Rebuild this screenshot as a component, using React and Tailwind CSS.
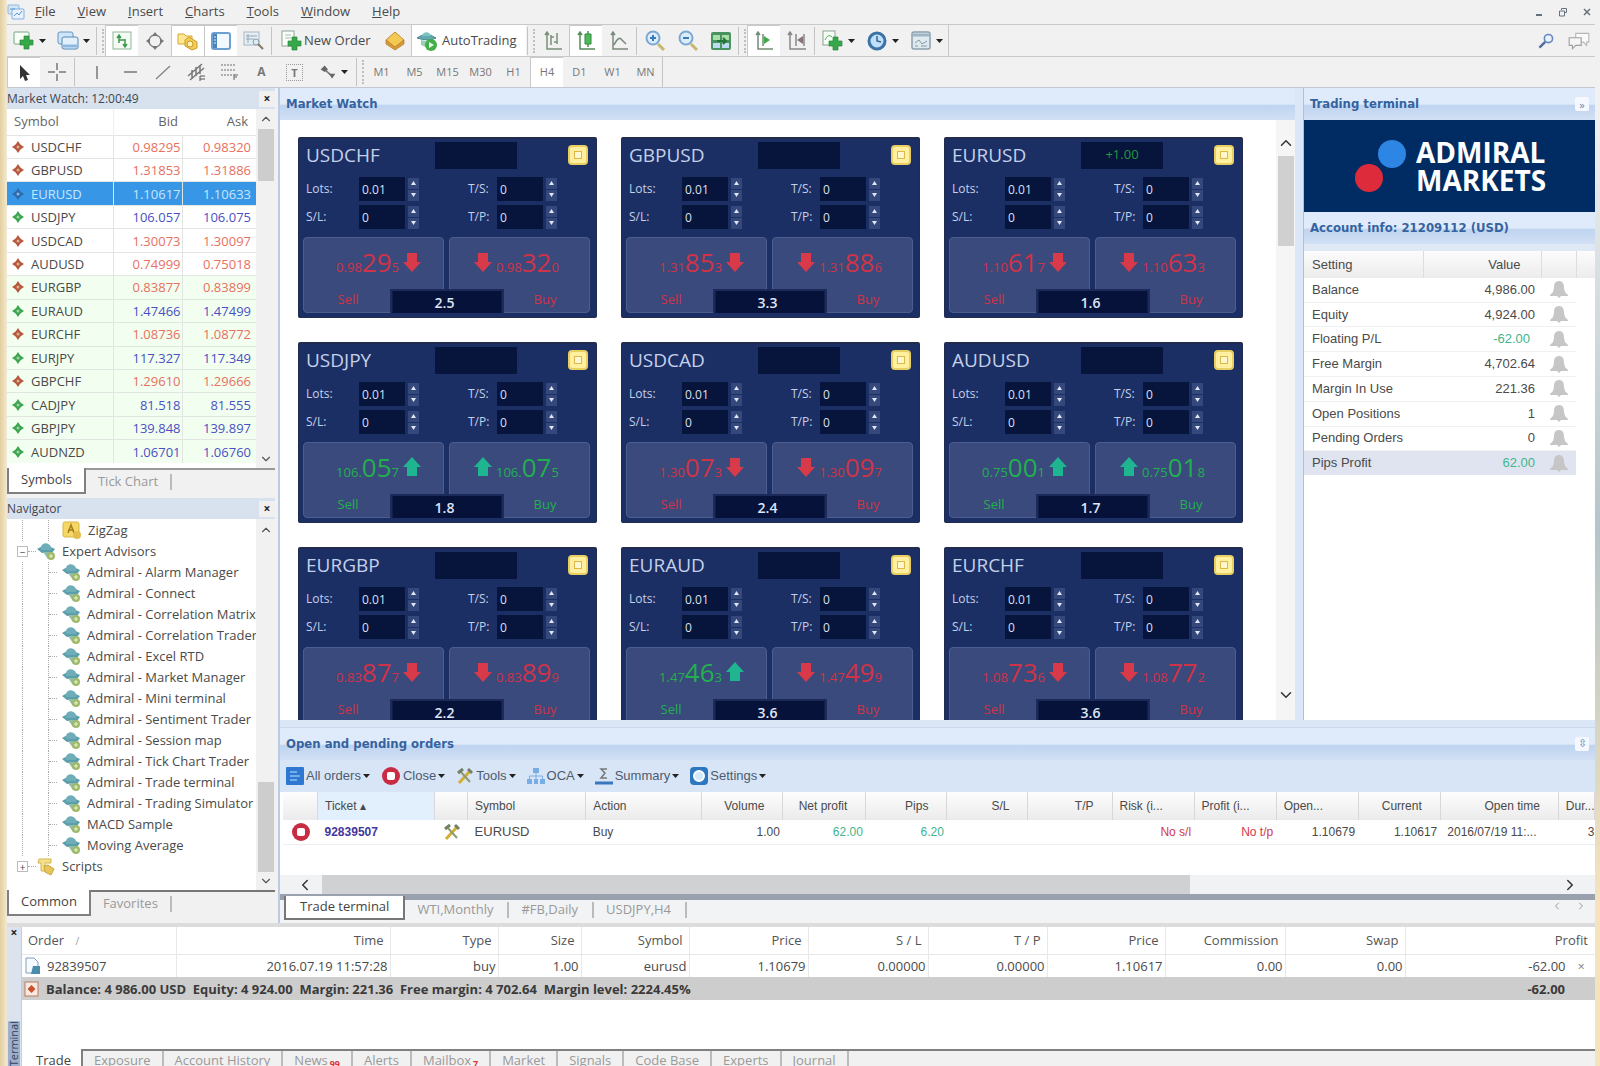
import React from "react";
import {
  ChevronDown,
  ChevronLeft,
  ChevronRight,
  ChevronUp,
} from "lucide-react";

const menus = ["File", "View", "Insert", "Charts", "Tools", "Window", "Help"];

const quotes = [
  ["USDCHF", "0.98295", "0.98320", "down"],
  ["GBPUSD", "1.31853", "1.31886", "down"],
  ["EURUSD", "1.10617", "1.10633", "selected"],
  ["USDJPY", "106.057", "106.075", "up"],
  ["USDCAD", "1.30073", "1.30097", "down"],
  ["AUDUSD", "0.74999", "0.75018", "down"],
  ["EURGBP", "0.83877", "0.83899", "down"],
  ["EURAUD", "1.47466", "1.47499", "up"],
  ["EURCHF", "1.08736", "1.08772", "down"],
  ["EURJPY", "117.327", "117.349", "up"],
  ["GBPCHF", "1.29610", "1.29666", "down"],
  ["CADJPY", "81.518", "81.555", "up"],
  ["GBPJPY", "139.848", "139.897", "up"],
  ["AUDNZD", "1.06701", "1.06760", "up"],
];

const advisors = [
  "Admiral - Alarm Manager",
  "Admiral - Connect",
  "Admiral - Correlation Matrix",
  "Admiral - Correlation Trader",
  "Admiral - Excel RTD",
  "Admiral - Market Manager",
  "Admiral - Mini terminal",
  "Admiral - Sentiment Trader",
  "Admiral - Session map",
  "Admiral - Tick Chart Trader",
  "Admiral - Trade terminal",
  "Admiral - Trading Simulator",
  "MACD Sample",
  "Moving Average",
];

const cards = [
  { symbol: "USDCHF", sell: ["0.98", "29", "5"], buy: ["0.98", "32", "0"], spread: "2.5" },
  { symbol: "GBPUSD", sell: ["1.31", "85", "3"], buy: ["1.31", "88", "6"], spread: "3.3" },
  { symbol: "EURUSD", sell: ["1.10", "61", "7"], buy: ["1.10", "63", "3"], spread: "1.6", position: "+1.00" },
  { symbol: "USDJPY", sell: ["106.", "05", "7"], buy: ["106.", "07", "5"], spread: "1.8", sellUp: true, buyUp: true },
  { symbol: "USDCAD", sell: ["1.30", "07", "3"], buy: ["1.30", "09", "7"], spread: "2.4" },
  { symbol: "AUDUSD", sell: ["0.75", "00", "1"], buy: ["0.75", "01", "8"], spread: "1.7", sellUp: true, buyUp: true },
  { symbol: "EURGBP", sell: ["0.83", "87", "7"], buy: ["0.83", "89", "9"], spread: "2.2" },
  { symbol: "EURAUD", sell: ["1.47", "46", "3"], buy: ["1.47", "49", "9"], spread: "3.6", sellUp: true },
  { symbol: "EURCHF", sell: ["1.08", "73", "6"], buy: ["1.08", "77", "2"], spread: "3.6" },
];

const account = [
  ["Balance", "4,986.00"],
  ["Equity", "4,924.00"],
  ["Floating P/L", "-62.00", "text-[#3fb58c] pr-[11px]"],
  ["Free Margin", "4,702.64"],
  ["Margin In Use", "221.36"],
  ["Open Positions", "1"],
  ["Pending Orders", "0"],
  ["Pips Profit", "62.00", "text-[#3fb58c]"],
];

const terminalTabs = ["Exposure", "Account History", "News", "Alerts", "Mailbox", "Market", "Signals", "Code Base", "Experts", "Journal"];

export default function App() {
  return (
    <div className="flex h-screen flex-col overflow-hidden bg-[#f1f1f1] font-['Open_Sans',sans-serif] text-[13px] text-[#4a4a4a]">
      <div className="flex min-h-0 flex-1">
        <div className="w-[7px] shrink-0 bg-linear-to-r from-[#e3cf9f] to-[#f3ead2]" />
        <div className="flex min-w-0 flex-1 flex-col">
          <MenuBar />
          <MainToolbar />
          <DrawToolbar />
          <main className="flex min-h-0 flex-1 border-t border-[#c3c8d0]">
            <aside className="flex w-[268px] shrink-0 flex-col">
              <MarketWatch />
              <Navigator />
            </aside>
            <div className="ml-[3px] flex min-w-0 flex-1 flex-col border-l-2 border-[#bccbe2] bg-[#dbe6f6]">
              <div className="flex min-h-0 flex-1">
                <QuoteCards />
                <TradingTerminal />
              </div>
              <Orders />
              <ChartTabs />
            </div>
          </main>
          <Terminal />
        </div>
        <div className="w-[5px] shrink-0 bg-linear-to-b from-[#f1f1f1] from-10% via-[#b4c4c8] via-50% to-[#f6e3bd] to-85%" />
      </div>
    </div>
  );
}

function MenuBar() {
  return (
    <nav className="flex h-6 shrink-0 items-center">
      <svg width="18" height="16" viewBox="0 0 18 16" className="mr-[10px] shrink-0" fill="none">
        <rect x="1" y="1" width="11" height="9" rx="1" fill="#d4e5f6" stroke="#91b8df" />
        <rect x="5" y="5" width="12" height="10" rx="1" fill="#e7f2fc" stroke="#81afdc" />
        <path d="M7 12l3-3 2 2 3-4M3 5h5" stroke="#5f98cf" />
      </svg>
      <div className="flex gap-[22px]">
        {menus.map((m) => (
          <button key={m}>
            <span className="underline">{m[0]}</span>
            {m.slice(1)}
          </button>
        ))}
      </div>
      <div className="mr-1 ml-auto flex items-center gap-4 text-[#66717c]">
        <button aria-label="Minimize">
          <svg width="8" height="10" viewBox="0 0 8 10"><path d="M1 8h6" stroke="currentColor" strokeWidth="2" /></svg>
        </button>
        <button aria-label="Restore">
          <svg width="8" height="10" viewBox="0 0 8 10" fill="none" stroke="currentColor"><path d="M2.500 3V1.500h5v4H6M.5 4h5v5h-5z" /></svg>
        </button>
        <button aria-label="Close window">
          <svg width="8" height="10" viewBox="0 0 8 10"><path d="M1 2l6 6M7 2l-6 6" stroke="currentColor" strokeWidth="1.500" /></svg>
        </button>
      </div>
    </nav>
  );
}

function ToolButton({ label, pressed, wide, text, children }) {
  return (
    <button
      aria-label={label}
      className={`flex h-full shrink-0 items-center justify-center gap-1 ${wide ? "w-11" : "w-[33px]"} ${
        pressed ? "border-t border-l border-[#c9c9c9] bg-white" : ""
      }`}
    >
      {children}
      {text}
      {wide && <Caret />}
    </button>
  );
}

function Caret() {
  return (
    <svg width="7" height="4" viewBox="0 0 7 4" fill="#222">
      <path d="M0 0h7L3.500 4z" />
    </svg>
  );
}

function Divider() {
  return <div className="mx-px h-7 w-px shrink-0 bg-[#c4c4c4]" />;
}

function Grip() {
  return (
    <div className="flex shrink-0 items-center gap-[5px] px-px">
      <div className="h-7 w-px bg-[#c4c4c4]" />
      <div className="h-6 border-l-2 border-dotted border-[#c0c0c0]" />
    </div>
  );
}

function Plus({ x = 8, y = 8 }) {
  return (
    <path
      d={`M${x + 4} ${y}h5v4h4v5h-4v4h-5v-4h-4v-5h4z`}
      fill="#36a849"
      stroke="#2a863a"
      strokeWidth=".7"
    />
  );
}

function Icon({ size = 22, children }) {
  return (
    <svg width={size} height={size} viewBox="0 0 22 22" fill="none" className="shrink-0">
      {children}
    </svg>
  );
}

function MainToolbar() {
  return (
    <div className="flex h-8 shrink-0 items-center border-t border-[#c9c9c9]">
      <div className="flex h-full items-center border-r border-[#c9c9c9]">
        <ToolButton label="New chart" wide>
          <Icon>
            <rect x="1" y="2" width="15" height="12" rx="1" fill="#f7fff7" stroke="#76a583" />
            <Plus x={7} y={6} />
          </Icon>
        </ToolButton>
        <ToolButton label="Profiles" wide>
          <Icon>
            <rect x="1" y="2" width="15" height="12" rx="2" fill="#cfe4f7" stroke="#6796bf" />
            <rect x="5" y="7" width="16" height="12" rx="2" fill="#e3f0fb" stroke="#5587b4" />
            <path d="M6 16h14" stroke="#8db9e0" strokeWidth="3" />
          </Icon>
        </ToolButton>
        <Grip />
        <ToolButton label="Market Watch" pressed>
          <Icon>
            <rect x="2" y="2" width="18" height="17" fill="#f4fbf4" stroke="#8db795" />
            <path d="M8 13V6m-2 2l2-3 2 3M14 9v7m-2-2l2 3 2-3M8 10h6" stroke="#3d9a4c" strokeWidth="1.500" />
          </Icon>
        </ToolButton>
        <ToolButton label="Data Window">
          <Icon>
            <circle cx="11" cy="11" r="6" stroke="#8a8a8a" strokeWidth="1.500" />
            <path d="M11 2l3 4H8zM11 20l3-4H8zM2 11l4-3v6zM20 11l-4-3v6z" fill="#777" />
          </Icon>
        </ToolButton>
        <ToolButton label="Navigator" pressed>
          <Icon>
            <path d="M1 4h6l2 2h6v8H1z" fill="#ffe793" stroke="#d6a837" />
            <path d="M8 10l4-3 8 5v6l-5 2-7-4z" fill="#f6cb55" stroke="#c99928" />
            <circle cx="13" cy="14" r="3" fill="#fff1b4" stroke="#c99928" />
          </Icon>
        </ToolButton>
        <ToolButton label="Terminal" pressed>
          <Icon>
            <rect x="2" y="3" width="18" height="16" rx="2" fill="#f1f8ff" stroke="#6d9fd0" strokeWidth="2" />
            <path d="M3 4h4v14H3z" fill="#4c83b8" />
            <path d="M4 7h2M4 10h2M4 13h2" stroke="#dcecfb" />
          </Icon>
        </ToolButton>
        <ToolButton label="Strategy Tester">
          <Icon>
            <rect x="1" y="2" width="15" height="13" fill="#e6eef4" stroke="#a5b7c4" />
            <path d="M3 6h11M3 9h8M5 4v9" stroke="#8fa8b9" />
            <circle cx="13" cy="12" r="3" fill="#dceaf3" stroke="#869eae" />
            <path d="M15 14l5 5" stroke="#847968" strokeWidth="2" />
          </Icon>
        </ToolButton>
        <Divider />
        <button className="flex h-full w-[105px] items-center gap-px pl-2">
          <Icon>
            <rect x="1" y="1" width="12" height="15" fill="#f9fff9" stroke="#91a394" />
            <path d="M4 5h6M4 8h6" stroke="#aab9ad" />
            <Plus x={7} y={7} />
          </Icon>
          New Order
        </button>
        <ToolButton label="MetaEditor">
          <Icon>
            <path d="M11 2l9 8-9 8-9-8z" fill="#f3c853" stroke="#c28e2c" />
            <path d="M2 10v4l9 6 9-6v-4l-9 7z" fill="#d89c34" stroke="#b2772a" strokeWidth=".7" />
          </Icon>
        </ToolButton>
        <button className="flex h-full w-[115px] items-center gap-1 border-l border-[#c9c9c9] bg-white pl-1">
          <Icon>
            <path d="M1 8q9-7 19 0-7 4-19 0z" fill="#60aab0" stroke="#46868d" />
            <path d="M6 6c1-5 8-5 9 0z" fill="#7bc3c2" />
            <path d="M5 10v5l7 3 5-5z" fill="#9bcdbb" />
            <circle cx="15" cy="15" r="6" fill="#45ad4a" />
            <path d="M13 12l5 3-5 3z" fill="#eaffea" />
          </Icon>
          AutoTrading
        </button>
        <Grip />
        <ToolButton label="Bar chart">
          <Icon>
            <path d="M5 2v17h15M3 5l2-3 2 3M9 5v10M9 7h3M15 3v11M12 12h3" stroke="#789078" strokeWidth="1.500" />
          </Icon>
        </ToolButton>
        <ToolButton label="Candlesticks" pressed>
          <Icon>
            <path d="M5 2v17h15M3 5l2-3 2 3M13 1v16" stroke="#568b5c" strokeWidth="1.500" />
            <path d="M10 4h6v10h-6z" fill="#54b75c" stroke="#298d36" />
          </Icon>
        </ToolButton>
        <ToolButton label="Line chart">
          <Icon>
            <path d="M5 2v17h15M3 5l2-3 2 3M6 15q5-10 8-5l4 4" stroke="#7b8b7b" strokeWidth="1.500" />
          </Icon>
        </ToolButton>
        <Divider />
        <ToolButton label="Zoom in"><Magnifier plus /></ToolButton>
        <ToolButton label="Zoom out"><Magnifier /></ToolButton>
        <ToolButton label="Tile windows">
          <Icon>
            <rect x="1" y="2" width="20" height="18" rx="2" fill="#4a9260" />
            <path d="M3 5h7v5H3zM12 5h7v5h-7z" fill="#a9dfa6" />
            <path d="M3 13h7v5H3zM12 13h7v5h-7z" fill="#bddbf2" />
            <path d="M7 11h8m-2-3l3 3-3 3" stroke="#247638" strokeWidth="2" />
          </Icon>
        </ToolButton>
        <Grip />
        <ToolButton label="Auto scroll" pressed>
          <Icon>
            <path d="M5 2v17h15M3 5l2-3 2 3M10 4v12" stroke="#758a75" strokeWidth="1.500" />
            <path d="M11 6l6 4-6 4z" fill="#41a84c" />
          </Icon>
        </ToolButton>
        <ToolButton label="Chart shift">
          <Icon>
            <path d="M4 2v17h16M2 5l2-3 2 3M10 4v12M18 4v12" stroke="#888" strokeWidth="1.500" />
            <path d="M17 6v8l-6-4z" fill="#8b7272" />
          </Icon>
        </ToolButton>
        <Divider />
        <ToolButton label="Indicators" wide>
          <Icon>
            <rect x="1" y="1" width="12" height="14" fill="#f6fff6" stroke="#8ba18d" />
            <path d="M3 10q3-7 7-3" stroke="#5aa965" />
            <Plus x={7} y={7} />
          </Icon>
        </ToolButton>
        <ToolButton label="Periods" wide>
          <Icon>
            <circle cx="11" cy="11" r="8" fill="#bfe0fb" stroke="#3d72a6" strokeWidth="3" />
            <path d="M11 6v5l4 1" stroke="#3c6389" strokeWidth="1.500" />
          </Icon>
        </ToolButton>
        <ToolButton label="Templates" wide>
          <Icon>
            <rect x="2" y="2" width="18" height="17" rx="2" fill="#e0e9ee" stroke="#8ba0ad" strokeWidth="1.500" />
            <path d="M2 5h18" stroke="#9bb5c6" strokeWidth="3" />
            <path d="M5 13l4-3 3 4 5-3M5 16h3M11 16h6" stroke="#839ba9" />
          </Icon>
        </ToolButton>
      </div>
      <div className="mr-1 ml-auto flex items-center gap-3">
        <button aria-label="Search">
          <Icon size={18}>
            <circle cx="14" cy="8" r="5" fill="#eaf3fd" stroke="#6689bd" strokeWidth="2" />
            <path d="M10 12l-7 7" stroke="#526f9c" strokeWidth="3" />
          </Icon>
        </button>
        <button aria-label="Chat">
          <Icon size={24}>
            <path d="M8 4h12v8h-2v3l-3-3H8z" fill="#fafafa" stroke="#b7b7b7" />
            <path d="M2 8h11v7H8l-3 3v-3H2z" fill="#f5f5f5" stroke="#9e9e9e" />
          </Icon>
        </button>
      </div>
    </div>
  );
}

function Magnifier({ plus }) {
  return (
    <Icon>
      <path d="M14 14l6 6" stroke="#c8b66f" strokeWidth="3" />
      <circle cx="9" cy="8" r="6.500" fill="#dcecfa" stroke="#7ba8d3" strokeWidth="2" />
      <path d={plus ? "M6 8h6M9 5v6" : "M6 8h6"} stroke="#397bb8" strokeWidth="2" />
    </Icon>
  );
}

function DrawToolbar() {
  return (
    <div className="flex h-[31px] shrink-0 items-center border-t border-[#c9c9c9] text-[11px] text-[#777]">
      <div className="flex h-full items-center border-r border-[#c4c4c4]">
        <ToolButton label="Cursor" pressed>
          <Icon><path d="M7 3v14l3-3 2 5 3-1-2-5h4z" fill="#333" /></Icon>
        </ToolButton>
        <ToolButton label="Crosshair">
          <Icon><path d="M11 2v7M11 13v7M2 11h7M13 11h7" stroke="#777" strokeWidth="1.500" /></Icon>
        </ToolButton>
        <Divider />
        <div className="w-1" />
        <ToolButton label="Vertical line"><Icon><path d="M11 5v13" stroke="#777" strokeWidth="1.500" /></Icon></ToolButton>
        <ToolButton label="Horizontal line"><Icon><path d="M5 11h13" stroke="#777" strokeWidth="1.500" /></Icon></ToolButton>
        <ToolButton label="Trendline"><Icon><path d="M4 18L18 5" stroke="#888" strokeWidth="1.500" /></Icon></ToolButton>
        <ToolButton label="Channel">
          <Icon><path d="M3 15L17 3M5 19L19 7M7 9v9M11 6v9M15 4v9" stroke="#777" strokeWidth="1.500" /><path d="M15 15h5M15 18h5M15 15v5" stroke="#555" /></Icon>
        </ToolButton>
        <ToolButton label="Fibonacci">
          <Icon><path d="M3 4h15M3 9h15M3 14h11" stroke="#999" strokeWidth="1.500" strokeDasharray="2 1" /><path d="M16 13v6M16 14h4M16 16h3" stroke="#666" /></Icon>
        </ToolButton>
        <ToolButton text={<span className="text-[12px] font-bold">A</span>} />
        <ToolButton
          text={<span className="border border-dotted border-[#999] px-1 text-[11px] leading-[15px] font-bold">T</span>}
        />
        <ToolButton label="Arrows" wide>
          <Icon size={18}>
            <path d="M2 8l5-5 4 5-4 3z" fill="#666" />
            <path d="M8 9l7 6" stroke="#777" strokeWidth="2" />
            <path d="M12 13h8l-4 6z" fill="#666" />
          </Icon>
        </ToolButton>
        <Grip />
        {["M1", "M5", "M15", "M30", "H1", "H4", "D1", "W1", "MN"].map((p) => (
          <ToolButton key={p} text={p} pressed={p === "H4"} />
        ))}
      </div>
    </div>
  );
}

function DockTitle({ children }) {
  return (
    <div className="flex h-[21px] shrink-0 items-center justify-between bg-[#d8e2ee] text-[12px] text-[#3c4652]">
      <h2>{children}</h2>
      <button aria-label="Close panel" className="flex h-4 w-4 items-center justify-center bg-[#f0f0f0] text-[12px] font-bold text-[#222]">
        ×
      </button>
    </div>
  );
}

function Tab({ active, children }) {
  return (
    <button
      className={
        active
          ? "-mt-0.5 border-2 border-t-0 border-[#808080] bg-white px-3 text-[#444]"
          : "flex items-center pl-3 text-[#999]"
      }
    >
      {children}
      {!active && <span className="ml-3 h-4 border-l-2 border-[#bbb]" />}
    </button>
  );
}

function MarketWatch() {
  return (
    <section>
      <DockTitle>Market Watch: 12:00:49</DockTitle>
      <div className="flex h-[359px] items-stretch bg-white">
        <div className="flex-1">
          <table className="h-[354px] w-full border-collapse">
            <thead>
              <tr className="h-[26px] text-[#666]">
                <th className="w-[106px] border-r border-[#eee] p-0 pl-[7px] text-left font-normal">Symbol</th>
                <th className="w-[69px] p-0 pr-1 text-right font-normal">Bid</th>
                <th className="p-0 pr-2 text-right font-normal">Ask</th>
              </tr>
            </thead>
            <tbody>
              {quotes.map(([symbol, bid, ask, state], i) => {
                const price =
                  state === "selected" ? "text-[#c8e6ff]" : state === "up" ? "text-[#4a50c4]" : "text-[#e8705e]";
                return (
                  <tr
                    key={symbol}
                    className={`border-t border-[#e2e6e2] ${
                      state === "selected" ? "bg-[#3796e6] text-[#c8e6ff]" : i > 5 ? "bg-[#f2fff0]" : "bg-white"
                    }`}
                  >
                    <td className="border-r border-[#e2e6e2] p-0">
                      <span className="flex items-center gap-[7px] pl-[5px] leading-5">
                        <svg width="12" height="12" viewBox="0 0 12 12">
                          <path
                            d="M4 3l2-3 2 3 1 1 3 2-3 2-1 1-2 3-2-3-1-1-3-2 3-2z"
                            fill={state === "selected" ? "#2a6cae" : state === "up" ? "#3da550" : "#b8583a"}
                          />
                          <circle cx="6" cy="6" r="1.500" fill="#fff" opacity=".5" />
                        </svg>
                        {symbol}
                      </span>
                    </td>
                    <td className={`border-r border-[#e2e6e2] p-0 pr-px text-right leading-5 ${price}`}>{bid}</td>
                    <td className={`p-0 pr-[5px] text-right leading-5 ${price}`}>{ask}</td>
                  </tr>
                );
              })}
            </tbody>
          </table>
        </div>
        <div className="flex w-[19px] flex-col items-center bg-[#f1f1f1] text-[#555]">
          <ChevronUp size={14} strokeWidth={2} className="my-[3px]" />
          <div className="h-[52px] w-4 bg-[#cdcdcd]" />
          <ChevronDown size={14} className="mt-auto mb-0.5" />
        </div>
      </div>
      <div className="flex h-[26px] border-t-2 border-[#999]">
        <Tab active>Symbols</Tab>
        <Tab>Tick Chart</Tab>
      </div>
    </section>
  );
}

function AdvisorIcon() {
  return (
    <svg width="20" height="20" viewBox="0 0 20 20" className="shrink-0">
      <path d="M1 7q8-6 18 0l-3 4H6z" fill="#5c9fac" />
      <path d="M5 5c1-5 8-5 10 0v3H5z" fill="#6fadb8" />
      <path d="M7 10h9v4l-4 3z" fill="#8fbcae" />
      <circle cx="15" cy="14" r="4" fill="#9fb96a" />
      <path d="M13 14h4M15 12v4" stroke="#e9f2c8" />
    </svg>
  );
}

function Navigator() {
  return (
    <section className="mt-1 flex min-h-0 flex-1 flex-col">
      <DockTitle>Navigator</DockTitle>
      <div className="flex min-h-0 flex-1 bg-white">
        <ul className="min-w-0 flex-1 overflow-hidden pt-px leading-[21px]">
          <li className="ml-[15px] border-l border-dotted border-[#aaa] pl-[25px]">
            <div className="flex items-center gap-1.5 border-l border-dotted border-[#aaa] pl-[13px]">
              <svg width="20" height="19" viewBox="0 0 20 19">
                <rect x="1" y="1" width="16" height="15" rx="2" fill="#f5d766" stroke="#d9b548" />
                <path d="M6 12l3-8 3 8M6 9h6" stroke="#a77e1d" fill="none" strokeWidth="1.500" />
                <circle cx="15" cy="14" r="4" fill="#e4be4a" />
              </svg>
              ZigZag
            </div>
          </li>
          <li className="flex items-center pl-2.5">
            <span className="flex h-[11px] w-[11px] items-center justify-center border border-[#bbb] text-[10px] leading-none">−</span>
            <span className="w-2 border-t border-dotted border-[#aaa]" />
            <span className="mr-1.5"><AdvisorIcon /></span>
            Expert Advisors
          </li>
          {advisors.map((a) => (
            <li key={a} className="ml-[15px] border-l border-dotted border-[#aaa] pl-[25px]">
              <div className="flex h-[21px] items-center overflow-hidden border-l border-dotted border-[#aaa] whitespace-nowrap">
                <span className="mr-1 w-2 shrink-0 border-t border-dotted border-[#aaa]" />
                <AdvisorIcon />
                <span className="ml-1.5">{a}</span>
              </div>
            </li>
          ))}
          <li className="flex items-center pl-2.5">
            <span className="flex h-[11px] w-[11px] items-center justify-center border border-[#bbb] text-[10px] leading-none">+</span>
            <span className="w-2 border-t border-dotted border-[#aaa]" />
            <svg width="20" height="20" viewBox="0 0 20 20" className="mr-1.5">
              <path d="M3 2h12v4H9v8H5V6H2z" fill="#f3e08a" stroke="#d3b54f" />
              <path d="M8 9l4-1 6 4-3 6-6-3z" fill="#e5c65c" stroke="#c9a53a" />
            </svg>
            Scripts
          </li>
        </ul>
        <div className="flex w-[19px] flex-col items-center bg-[#f1f1f1] text-[#555]">
          <ChevronUp size={14} className="mt-1" />
          <div className="mt-auto h-[90px] w-4 bg-[#cdcdcd]" />
          <ChevronDown size={14} className="my-0.5" />
        </div>
      </div>
      <div className="mb-[7px] flex h-[26px] shrink-0 border-t-2 border-[#777]">
        <Tab active>Common</Tab>
        <Tab>Favorites</Tab>
      </div>
    </section>
  );
}

function PanelTitle({ children, button }) {
  return (
    <div className="flex h-8 shrink-0 items-center justify-between bg-linear-to-b from-[#dfeafa] from-50% via-[#bfd4f0] via-55% to-[#d2e0f4] px-1.5">
      <h2 className="font-['DejaVu_Sans_Condensed','DejaVu_Sans',sans-serif] text-[13px] font-bold text-[#35639f]">{children}</h2>
      {button && (
        <button aria-label="Collapse" className="flex h-3.5 w-3.5 items-center justify-center rounded-xs bg-[#f5f9ff] text-[11px] leading-none text-[#6c87ae]">
          {button}
        </button>
      )}
    </div>
  );
}

function QuoteCards() {
  return (
    <section className="flex min-w-0 flex-1 flex-col">
      <PanelTitle>Market Watch</PanelTitle>
      <div className="flex min-h-0 flex-1 bg-white">
        <div className="flex flex-1 flex-wrap content-start gap-6 overflow-hidden pt-[17px] pl-[18px]">
          {cards.map((c) => (
            <QuoteCard key={c.symbol} {...c} />
          ))}
        </div>
        <div className="flex w-[19px] flex-col items-center bg-[#f5f5f5] text-[#333]">
          <ChevronUp size={18} className="mt-3.5 mb-1" />
          <div className="h-[90px] w-4 bg-[#d0d0d0]" />
          <ChevronDown size={18} className="mt-auto mb-4" />
        </div>
      </div>
    </section>
  );
}

function Field({ id, label, value }) {
  return (
    <div className="flex items-center">
      <label htmlFor={id} className="flex-1 text-[12px]">{label}</label>
      <input id={id} defaultValue={value} className="h-6 w-[46px] bg-[#07143c] px-[3px] text-[12px] text-[#d9e0f2]" />
      <div className="ml-[3px] flex w-[11px] flex-col gap-px">
        <button aria-label={`${label} up`} className="flex h-[11px] items-center justify-center bg-[#34487c]">
          <svg width="5" height="4" viewBox="0 0 5 4"><path d="M0 4h5L2.500 0z" fill="#dfe6f6" /></svg>
        </button>
        <button aria-label={`${label} down`} className="flex h-[11px] items-center justify-center bg-[#34487c]">
          <svg width="5" height="4" viewBox="0 0 5 4"><path d="M0 0h5L2.500 4z" fill="#dfe6f6" /></svg>
        </button>
      </div>
    </div>
  );
}

function Arrow({ up }) {
  return (
    <svg width="18" height="20" viewBox="0 0 18 20" className={up ? "shrink-0" : "shrink-0 rotate-180"}>
      <path d="M9 0l9 10h-4v9H4v-9H0z" fill={up ? "#1fb590" : "#d93a4a"} />
    </svg>
  );
}

function Price({ parts }) {
  return (
    <span className="flex items-baseline">
      <span className="text-[13px]">{parts[0]}</span>
      <span className="text-[26px] leading-8">{parts[1]}</span>
      <span className="text-[13px]">{parts[2]}</span>
    </span>
  );
}

function QuoteCard({ symbol, sell, buy, spread, position, sellUp, buyUp }) {
  const side =
    "flex h-[76px] flex-1 flex-col rounded-sm border border-[#4c5d8f] bg-[#3a4a7c] pt-2";
  return (
    <article className="h-[181px] w-[299px] rounded-xs border border-t-2 border-[#222c4d] bg-[#1b2f64] text-[#c5d0ea]">
      <header className="flex h-8 items-center pr-2 pl-[7px]">
        <h3 className="w-[129px] text-[19px]">{symbol}</h3>
        <span className="flex h-[27px] w-[82px] items-center justify-center bg-[#07143c] text-[13px] text-[#1f9a3c]">{position}</span>
        <button aria-label="Options" className="ml-auto flex h-5 w-5 items-center justify-center rounded-sm border-2 border-[#e9cf62] bg-[#fff0a0]">
          <span className="h-2 w-2 border border-[#dfb84b] bg-[#fff8cf]" />
        </button>
      </header>
      <div className="flex pt-1.5">
        <div className="flex w-[120px] flex-col gap-1 pl-[7px]">
          <Field id={`${symbol}-lots`} label="Lots:" value="0.01" />
          <Field id={`${symbol}-sl`} label="S/L:" value="0" />
        </div>
        <div className="ml-[49px] flex w-[89px] flex-col gap-1">
          <Field id={`${symbol}-ts`} label="T/S:" value="0" />
          <Field id={`${symbol}-tp`} label="T/P:" value="0" />
        </div>
      </div>
      <div className="relative mt-2 mr-1.5 ml-1 flex gap-[5px]">
        <button className={`${side} ${sellUp ? "text-[#22b04e]" : "text-[#cf3347]"}`}>
          <span className="flex items-center justify-end gap-1 pr-[22px]">
            <Price parts={sell} />
            <Arrow up={sellUp} />
          </span>
          <span className="mt-3 w-[88px] text-center text-[13px]">Sell</span>
        </button>
        <button className={`${side} ${buyUp ? "text-[#22b04e]" : "text-[#cf3347]"}`}>
          <span className="flex items-center gap-1 pl-6">
            <Arrow up={buyUp} />
            <Price parts={buy} />
          </span>
          <span className="mt-3 w-[88px] self-end text-center text-[13px]">Buy</span>
        </button>
        <output className="absolute bottom-0 left-1/2 flex h-6 w-[113px] -translate-x-1/2 items-center justify-center border-2 border-b-0 border-[#1b2a58] bg-[#06123a] pr-1 text-[14px] font-semibold text-[#dfe6f6]">
          {spread}
        </output>
      </div>
    </article>
  );
}

function TradingTerminal() {
  return (
    <aside className="ml-2 flex w-[292px] shrink-0 flex-col border-l border-[#a9c1e2] bg-white">
      <PanelTitle button="»">Trading terminal</PanelTitle>
      <div className="flex h-[92px] shrink-0 items-center bg-[#012c63]">
        <svg width="54" height="52" viewBox="0 0 54 52" className="ml-[50px]">
          <circle cx="38" cy="14" r="14" fill="#2e86e4" />
          <circle cx="15" cy="38" r="14" fill="#de2b3b" />
        </svg>
        <div className="ml-2 text-[28px] leading-7 font-bold text-white">
          ADMIRAL
          <br />
          MARKETS
        </div>
      </div>
      <PanelTitle>Account info: 21209112 (USD)</PanelTitle>
      <div className="h-[7px] shrink-0 bg-[#dfe9f6]" />
      <div className="bg-white font-['Liberation_Sans',sans-serif] text-[13px] text-[#4a4a4a]">
        <table className="h-[224px] w-full border-collapse">
          <thead>
            <tr className="h-[27px] bg-linear-to-b from-[#fcfcfc] to-[#ececec]">
              <th className="w-[119px] border-r border-[#ddd] pl-2 text-left font-normal">Setting</th>
              <th className="w-[118px] border-r border-[#ddd] pr-5 text-right font-normal">Value</th>
              <th aria-label="Alert" className="w-[35px] border-r border-[#ddd]" />
              <th />
            </tr>
          </thead>
          <tbody>
            {account.map(([name, value, tone]) => {
              const bg = name === "Pips Profit" ? "bg-[#dfe4f0]" : "border-b border-[#f0f0f0]";
              return (
                <tr key={name}>
                  <td className={`p-0 pl-2 leading-5 ${bg}`}>{name}</td>
                  <td className={`p-0 text-right leading-5 ${bg} ${tone && tone.includes("pr-") ? "" : "pr-1.5"} ${tone || ""}`}>{value}</td>
                  <td className={`p-0 ${bg}`}>
                    <svg width="18" height="17" viewBox="0 0 18 17" className="mx-auto" fill="#c6c6c6">
                      <path d="M9 0c4 0 5 3 5 7l1 4 3 3v1H0v-1l3-3 1-4c0-4 1-7 5-7zM7 15h4l-2 2z" />
                    </svg>
                  </td>
                  <td />
                </tr>
              );
            })}
          </tbody>
        </table>
      </div>
    </aside>
  );
}

function ToolsIcon() {
  return (
    <svg width="18" height="18" viewBox="0 0 18 18" fill="none">
      <path d="M3 16L14 4" stroke="#d5ae35" strokeWidth="3" />
      <path d="M4 4l10 11" stroke="#8b9d73" strokeWidth="2" />
      <path d="M2 6l5-4M12 2l4 4" stroke="#718067" strokeWidth="3" />
    </svg>
  );
}

function StopIcon() {
  return (
    <svg width="20" height="20" viewBox="0 0 20 20">
      <circle cx="10" cy="10" r="9" fill="#c92c42" />
      <rect x="6" y="6" width="8" height="8" rx="2" fill="#fff" />
    </svg>
  );
}

const orderTools = [
  ["All orders", <svg width="18" height="18" viewBox="0 0 18 18"><rect width="18" height="18" rx="1" fill="#2e78d2" /><path d="M4 5h7M4 9h10M4 13h7" stroke="#8cc0f5" strokeWidth="1.500" /></svg>],
  ["Close", <StopIcon />],
  ["Tools", <ToolsIcon />],
  ["OCA", <svg width="18" height="18" viewBox="0 0 18 18" fill="#78aee4"><path d="M6 1h6v5H6zM0 12h5v5H0zM7 12h4v5H7zM13 12h5v5h-5z" /><path d="M9 5v8M2.500 13V9h13v4" fill="none" stroke="#78aee4" /></svg>],
  ["Summary", <svg width="18" height="18" viewBox="0 0 18 18" fill="none"><path d="M12 2H6l4 4-4 5h6" stroke="#777" strokeWidth="1.500" /><path d="M0 16h18" stroke="#3976bd" strokeWidth="3" /></svg>],
  ["Settings", <svg width="18" height="18" viewBox="0 0 18 18"><rect width="18" height="18" rx="4" fill="#2d77c0" /><circle cx="9" cy="9" r="5" fill="#cfe9ff" stroke="#fff" strokeWidth="2" /></svg>],
];

const orderColumns = [
  ["", "w-[36px]", "text-left"],
  ["Ticket", "w-[117px]", "text-left"],
  ["", "w-[33px]", "text-left"],
  ["Symbol", "w-[118px]", "text-left"],
  ["Action", "w-[116px]", "text-left"],
  ["Volume", "w-[81px]", "text-right"],
  ["Net profit", "w-[83px]", "text-right"],
  ["Pips", "w-[81px]", "text-right"],
  ["S/L", "w-[81px]", "text-right"],
  ["T/P", "w-[84px]", "text-right"],
  ["Risk (i...", "w-[82px]", "text-left"],
  ["Profit (i...", "w-[82px]", "text-left"],
  ["Open...", "w-[82px]", "text-left"],
  ["Current", "w-[82px]", "text-right"],
  ["Open time", "w-[118px]", "text-right"],
  ["Dur...", "w-[36px]", "text-left"],
];

function Orders() {
  const num = "pr-[3px] text-right";
  return (
    <section className="mt-[7px] flex shrink-0 flex-col border-t border-[#c9d8ec] font-['Liberation_Sans',sans-serif]">
      <PanelTitle button="⇳">Open and pending orders</PanelTitle>
      <div className="flex h-8 items-center gap-[11px] bg-[#d8e5f6] pl-1.5">
        {orderTools.map(([label, icon]) => (
          <button key={label} className="flex items-center gap-0.5 text-[13px] text-[#4d5b6e]">
            {icon}
            {label}
            <Caret />
          </button>
        ))}
      </div>
      <div className="overflow-hidden bg-white">
        <table className="w-full table-fixed border-collapse border-l-[3px] border-white text-[12px] whitespace-nowrap">
          <thead>
            <tr className="h-7 bg-linear-to-b from-[#fdfdfd] to-[#ebebeb]">
              {orderColumns.map(([name, width, align], i) => (
                <th
                  key={i}
                  className={`overflow-hidden border-r border-[#d8d8d8] py-0 font-normal ${width} ${align} ${
                    align === "text-right" ? "pr-[18px]" : "pl-[7px]"
                  } ${name === "Ticket" ? "bg-[#e2effc]" : ""}`}
                >
                  {name}
                  {name === "Ticket" && " ▴"}
                </th>
              ))}
            </tr>
          </thead>
          <tbody>
            <tr className="h-[25px] border-b border-[#eee]">
              <td className="py-0 pl-2"><StopIcon /></td>
              <td className="py-0 pl-[7px] font-bold text-[#45379c]">92839507</td>
              <td className="py-0 pl-2"><ToolsIcon /></td>
              <td className="py-0 pl-[7px] text-[13px]">EURUSD</td>
              <td className="py-0 pl-[7px]">Buy</td>
              <td className={num}>1.00</td>
              <td className={`${num} text-[#3fb58c]`}>62.00</td>
              <td className={`${num} text-[#3fb58c]`}>6.20</td>
              <td />
              <td />
              <td className={`${num} text-[#d2384a]`}>No s/l</td>
              <td className={`${num} text-[#d2384a]`}>No t/p</td>
              <td className={num}>1.10679</td>
              <td className={num}>1.10617</td>
              <td className="pl-[7px]">2016/07/19 11:...</td>
              <td className="p-0 text-right">3</td>
            </tr>
          </tbody>
        </table>
        <div className="mt-[30px] flex h-[19px] items-center bg-[#f0f2f4]">
          <ChevronLeft size={18} className="ml-4 text-[#333]" />
          <div className="ml-2 h-full w-[66%] bg-[#cfd1d3]" />
          <ChevronRight size={18} className="mr-4 ml-auto text-[#333]" />
        </div>
      </div>
    </section>
  );
}

function ChartTabs() {
  return (
    <div className="flex h-[29px] shrink-0 border-t-[6px] border-[#98a1ad] bg-[#f2f3f4]">
      <button className="-mt-1 ml-1 h-6 border-2 border-t-0 border-[#777] bg-white px-3.5 text-[#444]">Trade terminal</button>
      {["WTI,Monthly", "#FB,Daily", "USDJPY,H4"].map((t) => (
        <button key={t} className="flex h-5 items-center pl-3 text-[#999]">
          {t}
          <span className="ml-3.5 h-4 border-l-2 border-[#bbb]" />
        </button>
      ))}
      <div className="mr-2 ml-auto flex items-start gap-3 text-[#999]">
        <ChevronLeft size={12} />
        <ChevronRight size={12} />
      </div>
    </div>
  );
}

const tradeColumns = [
  ["Time", "w-[214px]", "2016.07.19 11:57:28"],
  ["Type", "w-[108px]", "buy"],
  ["Size", "w-[83px]", "1.00"],
  ["Symbol", "w-[108px]", "eurusd"],
  ["Price", "w-[119px]", "1.10679"],
  ["S / L", "w-[120px]", "0.00000"],
  ["T / P", "w-[119px]", "0.00000"],
  ["Price", "w-[118px]", "1.10617"],
  ["Commission", "w-[120px]", "0.00"],
  ["Swap", "w-[120px]", "0.00"],
];

function Terminal() {
  return (
    <section className="flex h-[143px] shrink-0 border-t-4 border-[#dcdcdc]">
      <div className="flex w-[15px] shrink-0 flex-col items-center justify-between overflow-hidden border-r border-[#c5cdd8] bg-[#dbe3ee]">
        <button aria-label="Close terminal" className="text-[12px] leading-3 font-bold text-[#222]">×</button>
        <span className="rotate-180 bg-[#9fb0cc] text-[11px] leading-[12px] text-[#32405c] [writing-mode:vertical-rl]">Terminal</span>
      </div>
      <div className="flex min-w-0 flex-1 flex-col bg-white">
        <table className="w-full table-fixed border-collapse whitespace-nowrap">
          <thead>
            <tr className="h-[27px] border-b border-[#e8e8e8] text-[#555]">
              <th className="w-[154px] border-r border-[#e8e8e8] pl-1.5 text-left font-normal">
                Order <span className="ml-2 text-[10px] text-[#999]">/</span>
              </th>
              {tradeColumns.map(([name, width], i) => (
                <th key={i} className={`border-r border-[#e8e8e8] pr-1.5 text-right font-normal ${width}`}>{name}</th>
              ))}
              <th className="pr-[7px] text-right font-normal">Profit</th>
            </tr>
          </thead>
          <tbody>
            <tr className="h-[23px]">
              <td className="border-r border-[#e8e8e8] p-0">
                <span className="flex items-center gap-1.5 pl-0.5 leading-5">
                  <svg width="17" height="18" viewBox="0 0 17 18">
                    <path d="M2 1h8l4 4v11H2z" fill="#f7fbff" stroke="#7f9ebc" />
                    <path d="M9 9h7v8H7z" fill="#4a8cad" />
                  </svg>
                  92839507
                </span>
              </td>
              {tradeColumns.map(([, , value], i) => (
                <td key={i} className="border-r border-[#e8e8e8] p-0 pr-0.5 text-right leading-5">{value}</td>
              ))}
              <td className="p-0 pr-2.5 text-right leading-5">
                -62.00
                <button aria-label="Close order" className="ml-3 text-[#888]">×</button>
              </td>
            </tr>
            <tr className="h-[23px] bg-[#cdcdcd] font-bold text-[#3a3a3a]">
              <td colSpan={11} className="p-0">
                <span className="flex items-center gap-[7px] pl-0.5 leading-5 whitespace-pre">
                  <svg width="15" height="16" viewBox="0 0 15 16">
                    <rect x="1" y="1" width="13" height="14" fill="#fbe9e0" stroke="#b97a62" />
                    <path d="M7.500 4l4 4-4 4-4-4z" fill="#c4532e" />
                  </svg>
                  {"Balance: 4 986.00 USD  Equity: 4 924.00  Margin: 221.36  Free margin: 4 702.64  Margin level: 2224.45%"}
                </span>
              </td>
              <td className="p-0 pr-[30px] text-right leading-5">-62.00</td>
            </tr>
          </tbody>
        </table>
        <div className="mt-auto flex h-[17px] bg-[#f1f1f1]">
          <button className="h-full bg-white pt-0.5 pr-2.5 pl-3.5 leading-[18px] text-[#444]">Trade</button>
          <div className="flex flex-1 overflow-hidden border-t-2 border-l-2 border-[#808080] text-[#999]">
            {terminalTabs.map((t) => (
              <button key={t} className="flex items-start pl-[11px] leading-[18px]">
                {t}
                {t === "News" && <span className="mt-2 ml-0.5 text-[9px] leading-none font-bold text-[#d33]">99</span>}
                {t === "Mailbox" && <span className="mt-2 ml-0.5 text-[9px] leading-none font-bold text-[#d33]">7</span>}
                <span className="ml-[11px] h-4 border-l-2 border-[#bbb]" />
              </button>
            ))}
          </div>
        </div>
      </div>
    </section>
  );
}
